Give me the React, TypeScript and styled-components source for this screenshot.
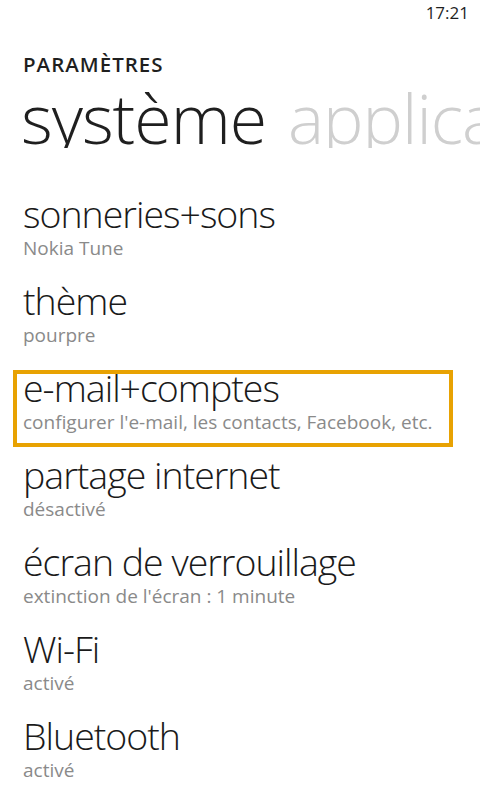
import styled, { createGlobalStyle } from 'styled-components';

const ACCENT = '#e8a202';

const GlobalStyle = createGlobalStyle`
  html, body {
    margin: 0;
    padding: 0;
    background: #ffffff;
  }
  body {
    font-family: 'Open Sans', 'Noto Sans', 'DejaVu Sans', sans-serif;
    color: #1f1f1f;
    -webkit-font-smoothing: antialiased;
  }
`;

const Screen = styled.div`
  width: 480px;
  height: 800px;
  overflow: hidden;
  background: #ffffff;
  display: flex;
  flex-direction: column;
`;

const StatusBar = styled.div`
  height: 26px;
  display: flex;
  justify-content: flex-end;
  align-items: flex-start;
  padding-right: 11px;
`;

const Clock = styled.span`
  font-size: 17px;
  line-height: 26px;
  color: #1f1f1f;
`;

const AppTitle = styled.div`
  margin: 28px 0 0 23px;
  font-size: 20.5px;
  font-weight: 600;
  line-height: 20px;
  letter-spacing: 1px;
  color: #1f1f1f;
`;

const PivotHeaders = styled.div`
  display: flex;
  gap: 22px;
  margin: 14px 0 0 21px;
  white-space: nowrap;
  overflow: hidden;
`;

const PivotHeader = styled.span<{ $active?: boolean }>`
  font-size: 68px;
  font-weight: 300;
  line-height: 60px;
  letter-spacing: -1px;
  color: ${(p) => (p.$active ? '#1f1f1f' : '#cfcfcf')};
`;

const List = styled.div`
  display: flex;
  flex-direction: column;
  gap: 10px;
  margin-top: 48px;
`;

const Item = styled.div<{ $focused?: boolean }>`
  margin-left: 13px;
  width: 440px;
  box-sizing: border-box;
  border: 4px solid ${(p) => (p.$focused ? ACCENT : 'transparent')};
  padding: 0 6px 9px 6px;
`;

const ItemTitle = styled.div`
  margin-top: -6px;
  font-size: 37.5px;
  font-weight: 350;
  line-height: 40px;
  letter-spacing: -1px;
  color: #1a1a1a;
  white-space: nowrap;
`;

const ItemSubtitle = styled.div`
  margin-top: 2px;
  font-size: 19px;
  line-height: 24px;
  color: #8a8a8a;
  white-space: nowrap;
`;

interface Setting {
  title: string;
  detail: string;
  focused?: boolean;
}

const settings: Setting[] = [
  { title: 'sonneries+sons', detail: 'Nokia Tune' },
  { title: 'thème', detail: 'pourpre' },
  {
    title: 'e-mail+comptes',
    detail: "configurer l'e-mail, les contacts, Facebook, etc.",
    focused: true,
  },
  { title: 'partage internet', detail: 'désactivé' },
  { title: 'écran de verrouillage', detail: "extinction de l'écran : 1 minute" },
  { title: 'Wi-Fi', detail: 'activé' },
  { title: 'Bluetooth', detail: 'activé' },
];

export default function App() {
  return (
    <>
      <GlobalStyle />
      <Screen>
        <StatusBar>
          <Clock>17:21</Clock>
        </StatusBar>
        <AppTitle>PARAMÈTRES</AppTitle>
        <PivotHeaders>
          <PivotHeader $active>système</PivotHeader>
          <PivotHeader>applications</PivotHeader>
        </PivotHeaders>
        <List>
          {settings.map((s) => (
            <Item key={s.title} $focused={s.focused}>
              <ItemTitle>{s.title}</ItemTitle>
              <ItemSubtitle>{s.detail}</ItemSubtitle>
            </Item>
          ))}
        </List>
      </Screen>
    </>
  );
}
